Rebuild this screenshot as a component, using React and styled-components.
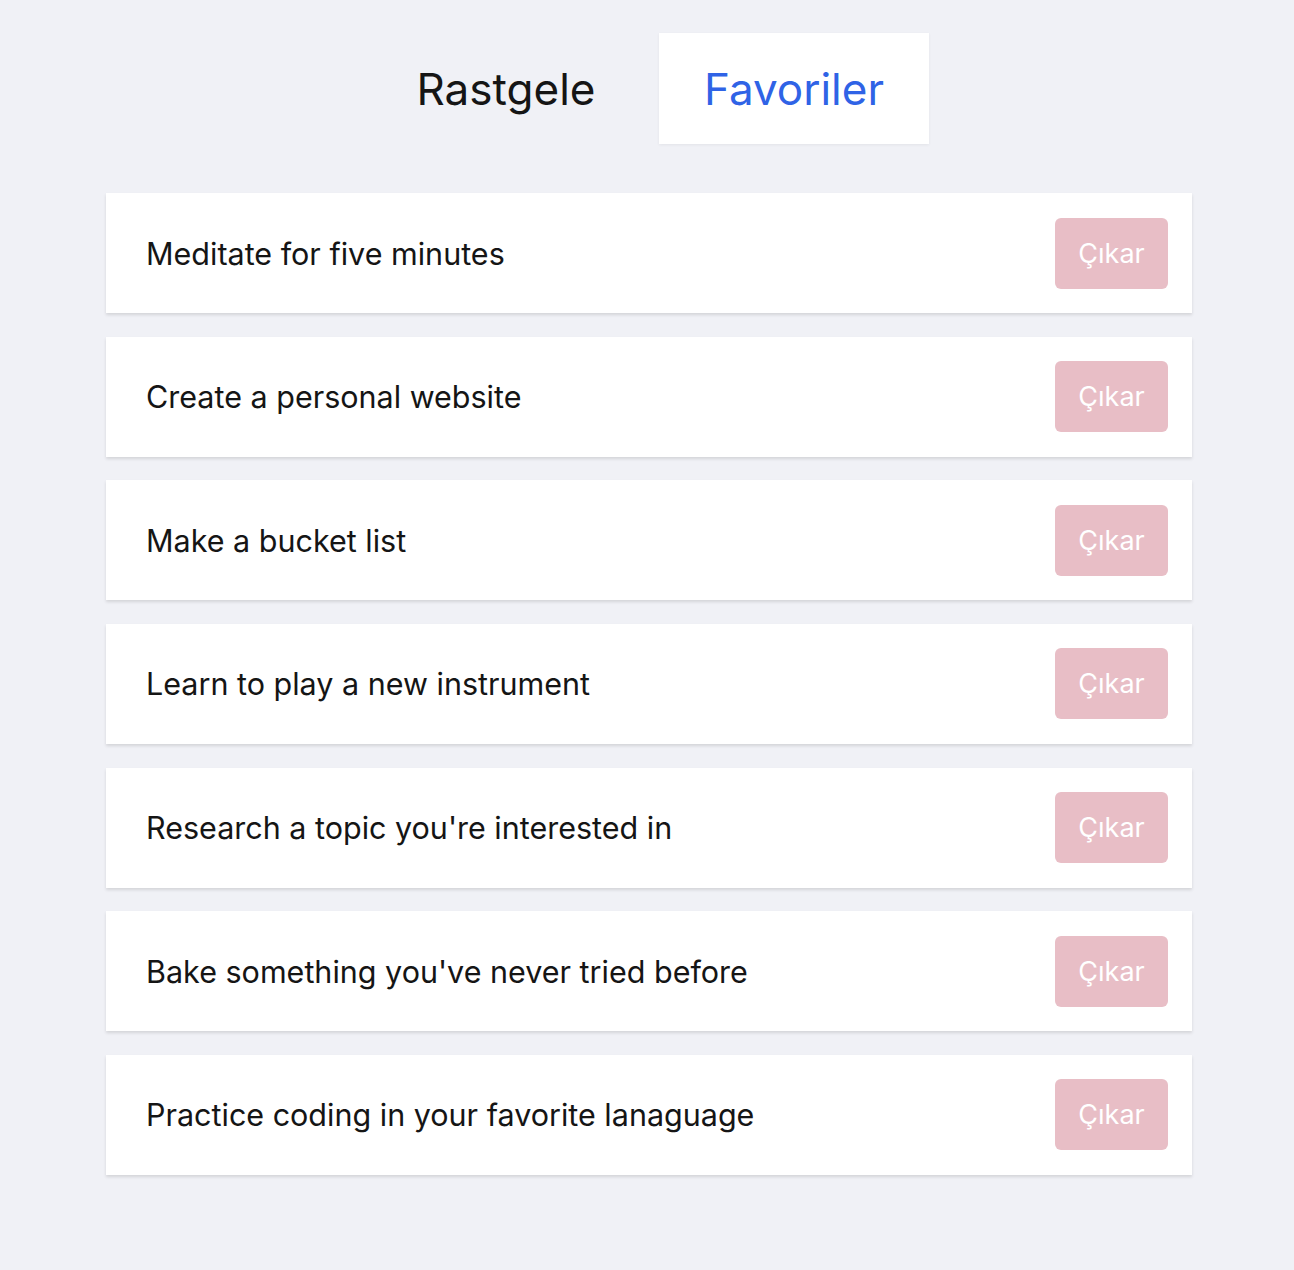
import React from "react";
import styled, { createGlobalStyle } from "styled-components";

const Global = createGlobalStyle`
  html, body { margin: 0; padding: 0; background: #f0f1f6; }
  body { font-family: Inter, "Noto Sans", "Liberation Sans", sans-serif; }
  * { box-sizing: border-box; }
`;

const Page = styled.div`
  display: flex;
  flex-direction: column;
  align-items: center;
  padding: 33px 0 80px;
  min-height: 1270px;
`;

const Tabs = styled.nav`
  display: flex;
  gap: 18px;
  margin-left: 6px;
`;

const Tab = styled.button`
  width: 270px;
  height: 111px;
  border: none;
  font-family: inherit;
  font-size: 44px;
  font-weight: 400;
  color: ${(p) => (p.$active ? "#2f63e6" : "#151515")};
  background: ${(p) => (p.$active ? "#ffffff" : "transparent")};
  box-shadow: ${(p) => (p.$active ? "0 1px 3px rgba(0,0,0,0.06)" : "none")};
  cursor: pointer;
`;

const List = styled.ul`
  list-style: none;
  margin: 49px 0 0 4px;
  padding: 0;
  width: 1086px;
  display: flex;
  flex-direction: column;
  gap: 23.67px;
`;

const Card = styled.li`
  height: 120px;
  background: #fff;
  display: flex;
  align-items: center;
  justify-content: space-between;
  padding: 0 24px 0 40px;
  box-shadow: 0 2px 3px rgba(0, 0, 0, 0.12);
`;

const Label = styled.span`
  font-size: 30.5px;
  color: #151515;
`;

const Remove = styled.button`
  width: 113px;
  height: 71px;
  border: none;
  border-radius: 6px;
  background: #e8bec6;
  color: #fff;
  font-family: inherit;
  font-size: 27px;
  cursor: pointer;
`;

const items = [
  "Meditate for five minutes",
  "Create a personal website",
  "Make a bucket list",
  "Learn to play a new instrument",
  "Research a topic you're interested in",
  "Bake something you've never tried before",
  "Practice coding in your favorite lanaguage",
];

export default function App() {
  return (
    <>
      <Global />
      <Page>
        <Tabs>
          <Tab>Rastgele</Tab>
          <Tab $active>Favoriler</Tab>
        </Tabs>
        <List>
          {items.map((t) => (
            <Card key={t}>
              <Label>{t}</Label>
              <Remove>Çıkar</Remove>
            </Card>
          ))}
        </List>
      </Page>
    </>
  );
}
